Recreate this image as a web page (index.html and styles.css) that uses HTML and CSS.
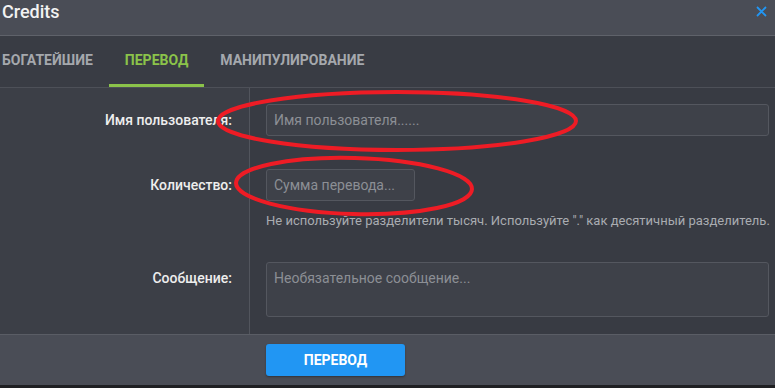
FILE: index.html
```html
<!DOCTYPE html>
<html lang="ru">
<head>
<meta charset="utf-8">
<link rel="stylesheet" href="styles.css">
</head>
<body>
<div class="dialog">
  <div class="header">
    <span class="title">Credits</span>
    <svg class="close" width="11" height="11" viewBox="0 0 11 11"><path d="M1 1L10 10M10 1L1 10" stroke="#2196f3" stroke-width="1.8" fill="none"/></svg>
  </div>
  <div class="tabs">
    <div class="tab">БОГАТЕЙШИЕ</div>
    <div class="tab active">ПЕРЕВОД</div>
    <div class="tab">МАНИПУЛИРОВАНИЕ</div>
  </div>
  <div class="body">
    <div class="row">
      <div class="label">Имя пользователя:</div>
      <div class="field"><div class="input wide">Имя пользователя......</div></div>
    </div>
    <div class="row row2">
      <div class="label">Количество:</div>
      <div class="field">
        <div class="input short">Сумма перевода...</div>
        <div class="help">Не используйте разделители тысяч. Используйте "." как десятичный разделитель.</div>
      </div>
    </div>
    <div class="row">
      <div class="label">Сообщение:</div>
      <div class="field"><div class="input area">Необязательное сообщение...</div></div>
    </div>
  </div>
  <div class="footer">
    <button class="btn">ПЕРЕВОД</button>
  </div>
  <div class="strip"></div>
  <svg class="marks" width="775" height="388" viewBox="0 0 775 388">
    <ellipse cx="397" cy="121" rx="179" ry="29" stroke="#ee1c25" stroke-width="4" fill="none"/>
    <ellipse cx="354" cy="186" rx="118" ry="28" transform="rotate(1.5 354 186)" stroke="#ee1c25" stroke-width="4" fill="none"/>
  </svg>
</div>
</body>
</html>
```
FILE: styles.css
```css
* { box-sizing: border-box; }
html, body { margin: 0; padding: 0; }
body {
  width: 775px;
  height: 388px;
  overflow: hidden;
  font-family: Roboto, "Liberation Sans", sans-serif;
  background: #202124;
}
.dialog {
  position: relative;
  width: 775px;
  height: 388px;
  display: flex;
  flex-direction: column;
}
.dialog > * { flex: none; }
.header {
  height: 36px;
  background: #4a4d56;
  border-bottom: 1px solid #5f626a;
  display: flex;
  align-items: flex-start;
  justify-content: space-between;
  padding: 0 8px 0 2px;
}
.title {
  color: #f2f2f2;
  font-size: 18px;
  font-weight: 500;
  line-height: 24px;
}
.close { margin-top: 6px; }
.tabs {
  height: 52px;
  background: #393c44;
  border-bottom: 1px solid #4d5058;
  display: flex;
  margin-left: -14px;
}
.tab {
  padding: 0 16px;
  font-size: 14px;
  font-weight: 700;
  color: #a5a8ad;
  line-height: 48px;
  border-bottom: 3px solid transparent;
}
.tab.active {
  color: #8bc34a;
  border-bottom-color: #8bc34a;
}
.body {
  display: flex;
  flex-direction: column;
  background: #383b43;
}
.row { display: flex; }
.label {
  width: 250px;
  flex: none;
  background: #3c3f47;
  border-right: 1px solid #52555d;
  padding: 16px 17px 0 0;
  text-align: right;
  color: #eeeeee;
  font-size: 14px;
  font-weight: 500;
  line-height: 32px;
}
.field {
  flex: 1;
  min-width: 0;
  padding: 16px 0 17px 16px;
}
.input {
  height: 32px;
  margin-right: 6px;
  background: #3e4149;
  border: 1px solid #54575f;
  border-radius: 3px;
  color: #8c8f95;
  font-size: 14px;
  line-height: 30px;
  padding: 0 7px;
}
.short { width: 149px; }
.area { height: 55px; }
.help {
  margin-top: 11px;
  color: #a9acb1;
  font-size: 13px;
  line-height: 18px;
  white-space: nowrap;
}
.row2 .field { padding-bottom: 16px; }
.footer {
  height: 51px;
  background: #4a4d56;
  border-top: 1px solid #5a5d65;
  padding: 9px 0 0 266px;
}
.btn {
  width: 139px;
  height: 32px;
  background: #2196f3;
  border: none;
  border-radius: 3px;
  color: #ffffff;
  font-family: Roboto, "Liberation Sans", sans-serif;
  font-size: 14px;
  font-weight: 700;
  box-shadow: 0 1px 2px rgba(0,0,0,0.35);
}
.strip {
  flex: 1 1 auto !important;
  background: #1f2023;
}
.marks {
  position: absolute;
  left: 0;
  top: 0;
  pointer-events: none;
}
```
